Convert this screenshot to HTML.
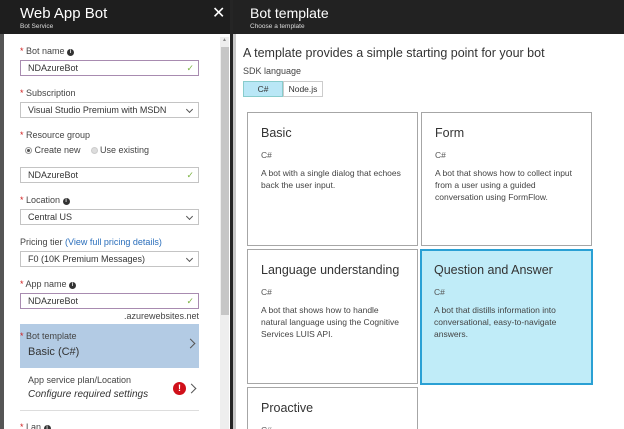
<!DOCTYPE html>
<html style="width:624px;height:429px;overflow:hidden"><head><meta charset="utf-8"><style>
*{margin:0;padding:0;box-sizing:border-box}
body{width:624px;height:429px;overflow:hidden;background:#252525;font-family:"Liberation Sans",sans-serif;color:#333;position:relative}
.a{position:absolute;white-space:nowrap}
.lbl{font-size:9px;color:#444}
.st{color:#d02020}
.inp{position:absolute;left:20px;width:179px;height:16px;border:1px solid #c4c4c4;background:#fff;font-size:9px;padding-left:7px;line-height:14px;color:#333}
.pur{border-color:#a88bb0}
.chk{position:absolute;right:4px;top:0;color:#7cb342;font-size:9px}
.dd{position:absolute;right:6px;top:4px;width:5px;height:5px;border-right:1px solid #555;border-bottom:1px solid #555;transform:rotate(45deg)}
.info{display:inline-block;width:7px;height:7px;border-radius:50%;background:#333;color:#fff;font-size:5px;line-height:7px;text-align:center;vertical-align:1px;font-weight:bold}
.card{position:absolute;border:1px solid #a6a6a6;background:#fff;overflow:hidden}
.card .t{position:absolute;left:13px;top:13px;font-size:12.5px;color:#333}
.card .c{position:absolute;left:13px;top:37px;font-size:8.5px;color:#555}
.card .d{position:absolute;left:13px;top:54px;font-size:8.5px;color:#444;line-height:12px;white-space:normal;width:142px}
</style></head><body>
<div class="a" style="left:0;top:0;width:230px;height:34px;background:#1e1e1e"></div>
<div class="a" style="left:20px;top:5px;font-size:15px;color:#fff">Web App Bot</div>
<div class="a" style="left:20px;top:23px;font-size:6.5px;color:#ddd">Bot Service</div>
<div class="a" style="left:212px;top:3px;font-size:16px;color:#fff">✕</div>
<div class="a" style="left:0;top:34px;width:4px;height:395px;background:#555"></div>
<div class="a" style="left:4px;top:34px;width:226px;height:395px;background:#fff"></div>
<div class="a" style="left:220px;top:37px;width:9px;height:392px;background:#eee"></div>
<div class="a" style="left:221px;top:47px;width:8px;height:268px;background:#c6c6c6"></div>
<div class="a" style="left:222px;top:37px;font-size:5px;color:#888">▲</div>

<div class="a lbl" style="left:20px;top:46px"><span class="st">*</span> Bot name <span class="info">i</span></div>
<div class="inp pur" style="top:60px">NDAzureBot<span class="chk">✓</span></div>
<div class="a lbl" style="left:20px;top:88px"><span class="st">*</span> Subscription</div>
<div class="inp" style="top:102px">Visual Studio Premium with MSDN<span class="dd"></span></div>
<div class="a lbl" style="left:20px;top:130px"><span class="st">*</span> Resource group</div>
<div class="a lbl" style="left:25px;top:145px"><span style="display:inline-block;width:7px;height:7px;border-radius:50%;border:1px solid #999;background:radial-gradient(#555 40%,#fff 45%);vertical-align:-1px"></span> Create new &nbsp;&nbsp;&nbsp;<span style="display:inline-block;width:7px;height:7px;border-radius:50%;border:1px solid #ccc;background:#ddd;vertical-align:-1px"></span> Use existing</div>
<div class="inp" style="top:167px">NDAzureBot<span class="chk">✓</span></div>
<div class="a lbl" style="left:20px;top:195px"><span class="st">*</span> Location <span class="info">i</span></div>
<div class="inp" style="top:209px">Central US<span class="dd"></span></div>
<div class="a lbl" style="left:20px;top:237px">Pricing tier <span style="color:#2a6ebb">(View full pricing details)</span></div>
<div class="inp" style="top:251px">F0 (10K Premium Messages)<span class="dd"></span></div>
<div class="a lbl" style="left:20px;top:279px"><span class="st">*</span> App name <span class="info">i</span></div>
<div class="inp pur" style="top:293px">NDAzureBot<span class="chk">✓</span></div>
<div class="a lbl" style="right:425px;top:311px;color:#444">.azurewebsites.net</div>
<div class="a" style="left:20px;top:324px;width:179px;height:44px;background:#b3cbe4"></div>
<div class="a lbl" style="left:20px;top:331px"><span class="st">*</span> Bot template</div>
<div class="a" style="left:28px;top:346px;font-size:11px;color:#333">Basic (C#)</div>
<div class="a" style="left:187px;top:340px;width:7px;height:7px;border-right:1px solid #555;border-top:1px solid #555;transform:rotate(45deg)"></div>
<div class="a lbl" style="left:28px;top:375px">App service plan/Location</div>
<div class="a" style="left:28px;top:389px;font-size:10px;font-style:italic;color:#333">Configure required settings</div>
<div class="a" style="left:173px;top:382px;width:13px;height:13px;border-radius:50%;background:#d0101a;color:#fff;font-size:9px;font-weight:bold;text-align:center;line-height:13px">!</div>
<div class="a" style="left:188px;top:385px;width:7px;height:7px;border-right:1px solid #555;border-top:1px solid #555;transform:rotate(45deg)"></div>
<div class="a" style="left:20px;top:410px;width:179px;height:1px;background:#ddd"></div>
<div class="a lbl" style="left:20px;top:422px"><span class="st">*</span> Lan <span class="info">i</span></div>

<div class="a" style="left:233px;top:0;width:391px;height:34px;background:#222"></div>
<div class="a" style="left:250px;top:5px;font-size:14px;color:#fff">Bot template</div>
<div class="a" style="left:250px;top:23px;font-size:6.5px;color:#ddd">Choose a template</div>
<div class="a" style="left:233px;top:34px;width:391px;height:395px;background:#fff"></div>
<div class="a" style="left:233px;top:34px;width:3px;height:395px;background:#c8c8c8"></div>
<div class="a" style="left:243px;top:46px;font-size:12.5px;color:#333">A template provides a simple starting point for your bot</div>
<div class="a lbl" style="left:243px;top:66px">SDK language</div>
<div class="a" style="left:243px;top:81px;width:40px;height:16px;background:#b9e7f6;border:1px solid #8cc;font-size:8.5px;text-align:center;line-height:14px">C#</div>
<div class="a" style="left:283px;top:81px;width:40px;height:16px;background:#fff;border:1px solid #ccc;font-size:8.5px;text-align:center;line-height:14px">Node.js</div>

<div class="card" style="left:247px;top:112px;width:171px;height:134px"><div class="t">Basic</div><div class="c">C#</div><div class="d">A bot with a single dialog that echoes back the user input.</div></div>
<div class="card" style="left:421px;top:112px;width:171px;height:134px"><div class="t">Form</div><div class="c">C#</div><div class="d">A bot that shows how to collect input from a user using a guided conversation using FormFlow.</div></div>
<div class="card" style="left:247px;top:249px;width:171px;height:135px"><div class="t">Language understanding</div><div class="c">C#</div><div class="d">A bot that shows how to handle natural language using the Cognitive Services LUIS API.</div></div>
<div class="card" style="left:420px;top:249px;width:173px;height:136px;background:#c0ecf8;border:2px solid #2aa0d4"><div class="t" style="left:12px;top:12px">Question and Answer</div><div class="c" style="left:12px;top:36px">C#</div><div class="d" style="left:12px;top:53px">A bot that distills information into conversational, easy-to-navigate answers.</div></div>
<div class="card" style="left:247px;top:387px;width:171px;height:42px;border-bottom:none"><div class="t">Proactive</div><div class="c">C#</div></div>
</body></html>
